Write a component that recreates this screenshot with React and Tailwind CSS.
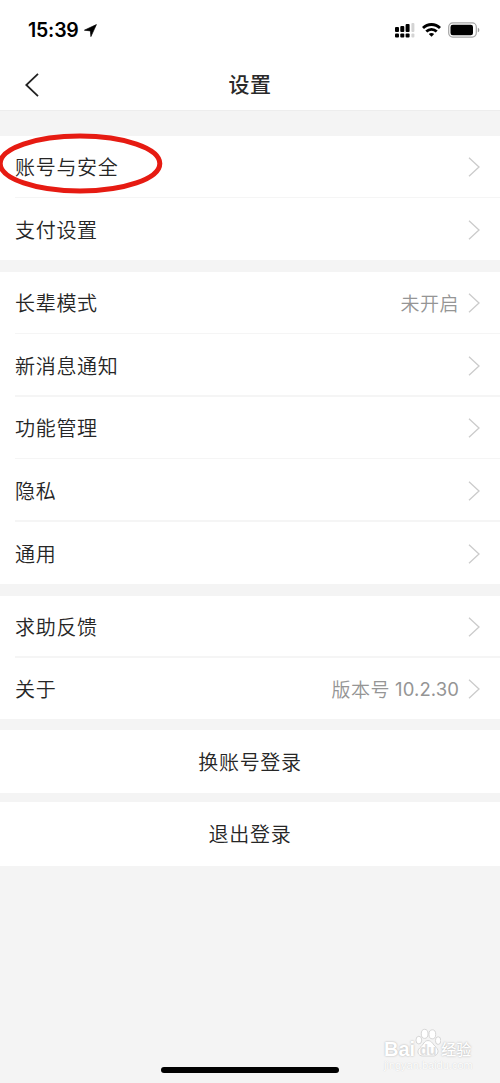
const GROUPS = [
  {
    className: 'mt-[25px] h-[124px]',
    rows: [{ label: '账号与安全', marked: true }, { label: '支付设置' }],
  },
  {
    className: 'mt-3 h-[312px]',
    rows: [
      { label: '长辈模式', value: '未开启' },
      { label: '新消息通知' },
      { label: '功能管理' },
      { label: '隐私' },
      { label: '通用' },
    ],
  },
  {
    className: 'mt-3 h-[123px]',
    rows: [{ label: '求助反馈' }, { label: '关于', value: '版本号', version: '10.2.30' }],
  },
];

function StatusBar() {
  return (
    <div className="flex h-[60px] items-center justify-between pl-7 pr-5">
      <div className="flex items-center gap-[5px] font-['Inter','Liberation_Sans',sans-serif] text-[19.500px] font-semibold leading-6 tracking-[-0.2px] text-black">
        <span>15:39</span>
        <svg className="h-[13px] w-[13px]" viewBox="0 0 13 13" fill="#000">
          <path d="M12.400.6.4 6.200l6 .7.500 5.700z" stroke="#000" strokeWidth=".7" strokeLinejoin="round" />
        </svg>
      </div>
      <div className="flex items-center gap-[7px]">
        <svg className="h-[15px] w-5" viewBox="0 0 20 15" fill="#000">
          <rect x="0" y="4" width="4" height="5" rx="1" />
          <rect x="5.300" y="3" width="4" height="6" rx="1" />
          <rect x="10.600" y="1" width="4" height="8" rx="1" />
          <rect x="16.400" y="0" width="3" height="9" rx="1" fill="#d4d4d4" />
          <rect x="0" y="10.500" width="4" height="4" rx="1" />
          <rect x="5.300" y="10.500" width="4" height="4" rx="1" />
          <rect x="10.600" y="10.500" width="4" height="4" rx="1" />
          <rect x="16.400" y="10.500" width="3" height="4" rx="1" fill="#d4d4d4" />
        </svg>
        <svg className="h-[14px] w-[19px]" viewBox="0 0 19 14" fill="none" stroke="#000" strokeWidth="2.800">
          <path d="M1 5.100C5.800.3 13.200.3 18 5.100" />
          <path d="M4.300 8.600c3-3 7.400-3 10.400 0" />
          <path d="M9.500 13.800 6.800 11.100c1.600-1.500 3.800-1.500 5.400 0z" fill="#000" stroke="none" />
        </svg>
        <svg className="h-4 w-8" viewBox="0 0 32 16">
          <rect x=".7" y=".9" width="27.600" height="14.200" rx="4" fill="none" stroke="#a6a6a6" strokeWidth="1.200" />
          <rect x="2.500" y="2.700" width="22.500" height="10.600" rx="2.300" fill="#000" />
          <path d="M29.800 5.700c2 .7 2 3.900 0 4.600z" fill="#999" />
        </svg>
      </div>
    </div>
  );
}

function Chevron() {
  return (
    <svg className="h-5 w-3 shrink-0" viewBox="0 0 12 20" fill="none" stroke="#cbcbcb" strokeWidth="1.300">
      <path d="m1 .8 10 9.200-10 9.200" />
    </svg>
  );
}

function Row({ row, first }) {
  return (
    <div className={`relative flex flex-1 items-center pl-[15px] pr-5 ${first ? 'pt-px' : 'pt-[2px]'}`}>
      {!first && <div className="absolute left-[15px] right-0 top-[-1px] h-[1.5px] bg-[#f5f5f5]" />}
      <span className="flex-1 text-[20px] leading-7 tracking-[0.7px] text-[#262626]">{row.label}</span>
      {row.value && (
        <span className="mr-[9px] flex items-center gap-[5px] text-[19px] leading-7 tracking-[0.5px] text-[#959595]">
          {row.value}
          {row.version && (
            <span className="font-['Inter','Liberation_Sans',sans-serif] text-[18.500px] font-normal tracking-[0.1px]">{row.version}</span>
          )}
        </span>
      )}
      <Chevron />
      {row.marked && (
        <svg className="absolute left-[-2px] top-[-4px] h-[62px] w-[166px]" viewBox="0 0 166 62" fill="none">
          <ellipse cx="82" cy="31.500" rx="79.800" ry="27.500" stroke="#e61b12" strokeWidth="5" />
        </svg>
      )}
    </div>
  );
}

function Watermark() {
  return (
    <div className="absolute left-[384px] top-[1028px] flex w-[92px] flex-col text-white">
      <div className="flex h-[30px] items-end [text-shadow:0_0_2px_#a8a8a8]">
        <span className="font-['Liberation_Sans',sans-serif] text-[20px] font-bold leading-[18px]">Bai</span>
        <span className="relative flex h-[30px] w-[26px] items-end justify-center">
          <svg className="absolute inset-0 h-[30px] w-[26px]" viewBox="0 0 27 31" fill="#fff" stroke="#d0d0d0" strokeWidth=".9">
            <ellipse cx="10" cy="6" rx="3.500" ry="4.700" />
            <ellipse cx="18" cy="6.500" rx="3.500" ry="4.700" />
            <ellipse cx="4" cy="12.500" rx="3" ry="4" />
            <ellipse cx="24" cy="13" rx="2.800" ry="4" />
            <path d="M13.500 13c4 0 5 4 8.500 7 4 4 1 9-3 9H8c-5 0-6.500-5-3-8.500C9 17 9.500 13 13.500 13z" />
          </svg>
          <span className="relative font-['Liberation_Sans',sans-serif] text-[14px] font-bold leading-[16px] text-[#dedede] [text-shadow:none]">du</span>
        </span>
        <span className="text-[15px] font-medium leading-[19px]">经验</span>
      </div>
      <span className="font-['Liberation_Sans',sans-serif] text-[11px] leading-[14px] [text-shadow:0_0_1px_#c4c4c4]">jingyan.baidu.com</span>
    </div>
  );
}

export default function App() {
  return (
    <main className="relative flex h-[1083px] w-[500px] flex-col overflow-hidden bg-[#f4f4f4] font-['Noto_Sans_CJK_SC',sans-serif] font-[350]">
      <header className="h-[111px] shrink-0 border-b border-[#ededed] bg-white">
        <StatusBar />
        <div className="grid h-[50px] grid-cols-[1fr_auto_1fr] items-center">
          <svg className="ml-[25px] h-6 w-[14px]" viewBox="0 0 14 24" fill="none" stroke="#222" strokeWidth="1.800">
            <path d="M13 .8 1.300 12 13 23.200" />
          </svg>
          <h1 className="pb-[4px] text-[21px] font-medium leading-7 tracking-[0.5px] text-[#2a2a2a]">设置</h1>
        </div>
      </header>
      {GROUPS.map((group) => (
        <section key={group.rows[0].label} className={`flex shrink-0 flex-col bg-white ${group.className}`}>
          {group.rows.map((row, i) => (
            <Row key={row.label} row={row} first={i === 0} />
          ))}
        </section>
      ))}
      <button className="mt-[11px] h-[63px] shrink-0 bg-white text-[20px] tracking-[0.7px] text-[#262626]">换账号登录</button>
      <button className="mt-[9px] h-[64px] shrink-0 bg-white text-[20px] tracking-[0.7px] text-[#262626]">退出登录</button>
      <Watermark />
      <div className="absolute left-[161px] top-[1067px] h-[6px] w-[178px] rounded-full bg-black" />
    </main>
  );
}
